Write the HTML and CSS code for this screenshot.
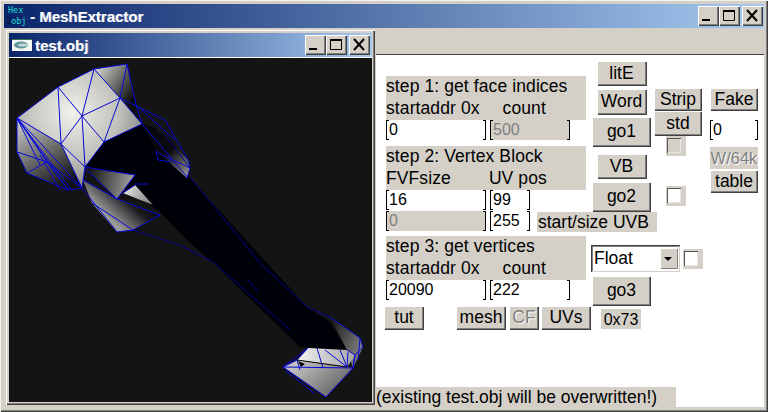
FILE: index.html
```html
<!DOCTYPE html>
<html lang="en">
<head>
  <meta charset="UTF-8">
  <meta name="viewport" content="width=device-width, initial-scale=1.0">
  <title>MeshExtractor</title>
  <link rel="stylesheet" href="styles.css">
</head>
<body>
  <div class="app">
    <div class="titlebar">
      <div class="app-icon"><span class="icon-hex">Hex</span><span class="icon-obj"><b>2</b>obj</span></div>
      <div class="title-text">- MeshExtractor</div>
      <div class="win-btns">
        <button class="win-btn"><svg width="21" height="20" viewBox="0 0 21 20"><rect x="4" y="13" width="8" height="2"/></svg></button>
        <button class="win-btn"><svg width="21" height="20" viewBox="0 0 21 20"><path d="M4.5 4.5h11v10h-11z" fill="none" stroke="#000"/><rect x="4" y="4" width="12" height="2"/></svg></button>
        <button class="win-btn close"><svg width="21" height="20" viewBox="0 0 21 20"><path d="M5 4l10 11M15 4L5 15" stroke="#000" stroke-width="2" fill="none"/></svg></button>
      </div>
    </div>

    <div class="workspace">
      <div class="child">
        <div class="titlebar child-title">
          <svg class="child-icon" width="20" height="12" viewBox="0 0 20 12">
            <rect width="20" height="12" fill="#f4f8f4"/>
            <rect width="20" height="1" fill="#3c6a4c"/>
            <ellipse cx="9" cy="6" rx="7" ry="3.5" fill="#5f9498"/>
            <ellipse cx="11" cy="6" rx="5" ry="1.5" fill="#c4d8d8"/>
          </svg>
          <div class="title-text">test.obj</div>
          <div class="win-btns">
            <button class="win-btn"><svg width="21" height="20" viewBox="0 0 21 20"><rect x="4" y="13" width="8" height="2"/></svg></button>
            <button class="win-btn"><svg width="21" height="20" viewBox="0 0 21 20"><path d="M4.5 4.5h11v10h-11z" fill="none" stroke="#000"/><rect x="4" y="4" width="12" height="2"/></svg></button>
            <button class="win-btn close"><svg width="21" height="20" viewBox="0 0 21 20"><path d="M5 4l10 11M15 4L5 15" stroke="#000" stroke-width="2" fill="none"/></svg></button>
          </div>
        </div>
        <svg class="mesh" width="363" height="344" viewBox="9 58 363 344">
          <defs>
            <radialGradient id="lit" gradientUnits="userSpaceOnUse" cx="72" cy="112" r="78">
              <stop offset="0" stop-color="#f2f2ec"/>
              <stop offset="0.6" stop-color="#c0c0bc"/>
              <stop offset="1" stop-color="#858585"/>
            </radialGradient>
            <linearGradient id="fan" gradientUnits="userSpaceOnUse" x1="25" y1="125" x2="65" y2="185">
              <stop offset="0" stop-color="#bbb"/>
              <stop offset="1" stop-color="#111"/>
            </linearGradient>
            <linearGradient id="cap" gradientUnits="userSpaceOnUse" x1="98" y1="72" x2="135" y2="95">
              <stop offset="0" stop-color="#c8c8c4"/>
              <stop offset="1" stop-color="#0c0c0c"/>
            </linearGradient>
            <linearGradient id="wedge" gradientUnits="userSpaceOnUse" x1="90" y1="172" x2="132" y2="180">
              <stop offset="0" stop-color="#181818"/>
              <stop offset="1" stop-color="#9c9c9c"/>
            </linearGradient>
            <linearGradient id="shard" gradientUnits="userSpaceOnUse" x1="125" y1="190" x2="153" y2="205">
              <stop offset="0" stop-color="#e0e0dc"/>
              <stop offset="1" stop-color="#777"/>
            </linearGradient>
            <linearGradient id="under" gradientUnits="userSpaceOnUse" x1="122" y1="230" x2="150" y2="200">
              <stop offset="0" stop-color="#9a9a9a"/>
              <stop offset="0.6" stop-color="#1c1c20"/>
              <stop offset="1" stop-color="#000"/>
            </linearGradient>
            <linearGradient id="side" gradientUnits="userSpaceOnUse" x1="188" y1="172" x2="155" y2="140">
              <stop offset="0" stop-color="#8a8a8a"/>
              <stop offset="0.6" stop-color="#0a0a0e"/>
            </linearGradient>
            <linearGradient id="foot" gradientUnits="userSpaceOnUse" x1="300" y1="362" x2="330" y2="397">
              <stop offset="0" stop-color="#c0c0c0"/>
              <stop offset="1" stop-color="#6a6a6a"/>
            </linearGradient>
            <linearGradient id="toe" gradientUnits="userSpaceOnUse" x1="300" y1="352" x2="350" y2="362">
              <stop offset="0" stop-color="#f0f0f0"/>
              <stop offset="1" stop-color="#aaa"/>
            </linearGradient>
            <linearGradient id="heel" gradientUnits="userSpaceOnUse" x1="360" y1="345" x2="320" y2="325">
              <stop offset="0" stop-color="#777"/>
              <stop offset="1" stop-color="#050508"/>
            </linearGradient>
          </defs>
          <rect x="9" y="58" width="363" height="344" fill="#141414"/>

          <polygon points="94,69 127,64 136,105 142,124 120,98" fill="url(#cap)"/>
          <polygon points="17,118 58,87 94,69 120,98 142,124 104,142 85,167 82,188 61,144" fill="url(#lit)"/>
          <polygon points="17,118 61,144 82,188 68,190 27,173 17,152" fill="url(#fan)"/>
          <polygon points="104,142 142,124 155,128 190,178 237,230 307,307 330,322 347,350 300,347 213,263 187,240 160,212 130,192 85,167" fill="#000008"/>
          <polygon points="142,124 165,135 188,160 190,168 187,178 158,153" fill="url(#side)"/>
          <polygon points="85,168 135,175 117,199" fill="url(#wedge)"/>
          <polygon points="123,193 135,185 153,205" fill="url(#shard)"/>
          <polygon points="83,180 117,199 160,215 133,230 117,232 92,203" fill="url(#under)"/>
          <polygon points="330,317 360,338 363,347 353,368 347,350" fill="url(#heel)"/>
          <polygon points="308,348 347,350 355,355 347,367 297,360" fill="url(#toe)"/>
          <polygon points="283,367 297,360 353,368 326,397" fill="url(#foot)"/>

          <g fill="none" stroke="#0808d8" stroke-width="1">
            <path d="M17 118L58 87L94 69L127 64L136 105L142 124L104 142L85 167L82 188L61 144L17 118"/>
            <path d="M58 87L61 144M58 87L82 116M94 69L82 116M94 69L120 98M127 64L120 98M120 98L82 116M82 116L104 142M120 98L104 142M82 116L61 144M82 116L85 167M61 144L85 167M120 98L142 124"/>
            <path d="M17 118L17 152L27 173L68 190L82 188M17 118L47 162M17 118L40 165M17 118L60 175M17 118L68 190M17 118L82 188M17 152L47 162L82 188M27 173L47 162M47 162L68 190M40 155L60 190M52 165L72 190"/>
            <path d="M85 167L135 175L117 199L85 168M123 193L135 185M135 184H148M82 188L117 232L133 230L160 215M83 180L117 199L160 215M92 203L133 230"/>
            <path d="M120 98L165 120L188 160L190 168L187 178M136 105L175 140M142 124L188 178M158 153L190 168M156 150L158 160L172 162"/>
            <path stroke="#04048c" d="M190 177L260 263L307 307L330 317M133 230L180 245L213 262L290 330M165 135L190 168M248 280L258 292"/>
            <path d="M308 348L297 360L283 367L326 397L353 368L355 355L347 350M308 348L283 367M283 367L353 368M297 360L300 370M317 348L323 368M325 350L347 367M340 350L347 367M348 352L347 367M286 371L315 394"/>
            <path d="M330 317L360 338L363 347L355 355L353 368M360 338L358 360"/>
          </g>
          <path d="M297 360L347 367" stroke="#000" fill="none"/>
          <polygon points="298,361 305,364 301,367" fill="#000"/>
        </svg>
      </div>

      <div class="right-side">
        <div class="menu-strip"></div>
        <div class="panel">
          <div class="form">
            <div class="form-main">
              <div class="step-row">
                <div class="step first">
                  <div class="step-label"><div>step 1: get face indices</div><div>startaddr 0x<span class="count-gap">count</span></div></div>
                  <div class="field-row">
                    <input class="field addr" value="0">
                    <input class="field num off" value="500" disabled>
                  </div>
                </div>
                <div class="step-btns">
                  <button class="btn small">litE</button>
                  <button class="btn small word">Word</button>
                  <button class="btn go">go1</button>
                </div>
              </div>

              <div class="step-row second">
                <div class="step">
                  <div class="step-label"><div>step 2: Vertex Block</div><div>FVFsize<span class="uv-gap">UV pos</span></div></div>
                  <div class="field-row">
                    <input class="field addr" value="16">
                    <input class="field short" value="99">
                  </div>
                  <div class="field-row">
                    <input class="field addr off" value="0" disabled>
                    <input class="field short" value="255">
                    <span class="tag uvb">start/size UVB</span>
                  </div>
                </div>
                <div class="step-btns vb-btns">
                  <button class="btn small">VB</button>
                  <button class="btn go">go2</button>
                </div>
              </div>

              <div class="step-row third">
                <div class="step">
                  <div class="step-label"><div>step 3: get vertices</div><div>startaddr 0x<span class="count-gap">count</span></div></div>
                  <div class="field-row">
                    <input class="field addr" value="20090">
                    <input class="field num" value="222">
                  </div>
                </div>
                <div class="step-btns float-col">
                  <div class="float-row">
                    <div class="combo"><span>Float</span><i class="combo-arrow"></i></div>
                    <div class="check"><i></i></div>
                  </div>
                  <button class="btn go">go3</button>
                </div>
              </div>

              <div class="tool-row">
                <button class="btn tut">tut</button>
                <button class="btn mesh-btn">mesh</button>
                <button class="btn cf" disabled>CF</button>
                <button class="btn uvs">UVs</button>
                <span class="tag hex">0x73</span>
              </div>
            </div>

            <div class="col-strip">
              <button class="btn side">Strip</button>
              <button class="btn side std">std</button>
              <div class="check dim"><i></i></div>
              <div class="check lower"><i></i></div>
            </div>

            <div class="col-fake">
              <button class="btn side">Fake</button>
              <input class="field fake" value="0">
              <button class="btn side w64" disabled>W/64k</button>
              <button class="btn side">table</button>
            </div>
          </div>
          <div class="status">(existing test.obj will be overwritten!)</div>
        </div>
      </div>
    </div>
  </div>
</body>
</html>
```

FILE: styles.css
```css
* {
  box-sizing: border-box;
}
body {
  margin: 0;
  width: 768px;
  height: 412px;
  overflow: hidden;
  font-family: "Liberation Sans", Arial, sans-serif;
  font-size: 17.5px;
  color: #000;
  background: #d4d0c8;
}
button, input {
  font-family: inherit;
  color: #000;
  margin: 0;
  padding: 0;
}
.app {
  width: 768px;
  height: 412px;
  padding: 4px;
  background: #d4d0c8;
  display: flex;
  flex-direction: column;
  box-shadow: inset 1px 1px 0 #f4f2ee, inset -1px -1px 0 #404040, inset -2px -2px 0 #808080;
}

/* title bars */
.titlebar {
  display: flex;
  align-items: center;
  height: 24px;
  flex-shrink: 0;
  padding: 0 1px 0 2px;
  background: linear-gradient(to right, #0a246a, #a6caf0);
}
.title-text {
  color: #fff;
  font-size: 15px;
  font-weight: bold;
  text-shadow: 1px 0 0 rgba(255,255,255,0.35);
}
.app-icon {
  width: 21px;
  height: 22px;
  margin-right: 3px;
  display: flex;
  flex-direction: column;
  font-family: "DejaVu Sans Mono", monospace;
  color: #22d8d0;
  white-space: nowrap;
}
.icon-hex {
  font-size: 8.5px;
  line-height: 10px;
  padding-left: 2px;
}
.icon-obj {
  font-size: 8.5px;
  line-height: 12px;
}
.icon-obj b {
  font-weight: normal;
  color: #04102c;
}
.win-btns {
  margin-left: auto;
  display: flex;
}
.win-btn {
  width: 21px;
  height: 20px;
  display: block;
  border: 0;
  background: #d4d0c8;
  box-shadow: inset 1px 1px 0 #fff, inset -1px -1px 0 #404040, inset -2px -2px 0 #808080;
}
.win-btn svg {
  display: block;
}
.win-btn.close {
  margin-left: 2px;
}

/* workspace */
.workspace {
  flex: 1;
  display: flex;
  min-height: 0;
}
.child {
  width: 369px;
  height: 375px;
  margin: 2px 1px 0 2px;
  padding: 3px;
  display: flex;
  flex-direction: column;
  background: #d4d0c8;
  box-shadow: inset 1px 1px 0 #fff, inset -1px -1px 0 #404040, inset -2px -2px 0 #808080;
}
.child-title {
  height: 25px;
  padding-left: 3px;
  padding-right: 2px;
  border-bottom: 1px solid #fff;
}
.child-icon {
  margin-right: 3px;
}
.mesh {
  display: block;
}
.right-side {
  width: 388px;
  display: flex;
  flex-direction: column;
}
.menu-strip {
  height: 27px;
  flex-shrink: 0;
  border-bottom: 1px solid #404040;
}
.panel {
  flex: 1;
  display: flex;
  flex-direction: column;
  background: #fff;
  border-bottom: 1px solid #d4d0c8;
}

/* form */
.form {
  display: flex;
  padding: 6px 0 0 10px;
}
.form-main {
  width: 265px;
  margin-right: 3px;
}
.step-row {
  display: flex;
  gap: 6px;
}
.step-row.second {
  margin-top: -1px;
}
.step-row.third {
  margin-top: 4px;
}
.step {
  width: 200px;
}
.step.first {
  margin-top: 15px;
}
.step-label {
  height: 44px;
  display: flex;
  flex-direction: column;
  gap: 1px;
  line-height: 21px;
  letter-spacing: 0.1px;
  white-space: nowrap;
  background: #d4d0c8;
}
.count-gap {
  margin-left: 23px;
}
.uv-gap {
  margin-left: 38px;
}
.field-row {
  display: flex;
  gap: 4px;
  white-space: nowrap;
}
.field {
  display: block;
  height: 20px;
  padding-left: 3px;
  border: 0;
  outline: 0;
  font-size: 16px;
  background:
    linear-gradient(#000, #000) left top / 1px 100% no-repeat,
    linear-gradient(#000, #000) right top / 1px 100% no-repeat,
    linear-gradient(#000, #000) left top / 3px 1px no-repeat,
    linear-gradient(#000, #000) left bottom / 3px 1px no-repeat,
    linear-gradient(#000, #000) right top / 3px 1px no-repeat,
    linear-gradient(#000, #000) right bottom / 3px 1px no-repeat,
    #fff;
}
.field.off {
  color: #808080;
  -webkit-text-fill-color: #808080;
  opacity: 1;
  background-color: #d4d0c8;
}
.addr {
  width: 100px;
}
.num {
  width: 80px;
}
.short {
  width: 40px;
}
.field-row + .field-row {
  margin-top: 1px;
}
.tag {
  background: #d4d0c8;
}
.uvb {
  height: 20px;
  line-height: 20px;
  width: 120px;
  flex-shrink: 0;
  margin-left: 3px;
  padding-left: 1px;
  margin-top: 1px;
}

/* buttons */
.btn {
  display: block;
  border: 0;
  font-size: 17.5px;
  line-height: 1;
  background: #d4d0c8;
  box-shadow: inset 1px 1px 0 #fff, inset -1px -1px 0 #404040, inset -2px -2px 0 #808080;
}
.btn:disabled {
  color: #808080;
  text-shadow: 1px 1px 0 #fff;
}
.step-btns {
  width: 59px;
  display: flex;
  flex-direction: column;
  align-items: center;
}
.small {
  width: 50px;
  height: 25px;
}
.word {
  height: 26px;
  margin-top: 3px;
}
.go {
  width: 59px;
  height: 30px;
  margin-top: 2px;
}
.vb-btns {
  padding-top: 8px;
}
.vb-btns .go {
  margin-top: 3px;
}
.float-col {
  align-items: flex-start;
  padding-top: 9px;
}
.float-col .go {
  margin-top: 4px;
}
.float-row {
  display: flex;
  align-items: center;
  margin-left: -1px;
  flex-shrink: 0;
}
.combo {
  width: 89px;
  height: 27px;
  flex-shrink: 0;
  padding: 3px 2px 0 3px;
  display: flex;
  justify-content: space-between;
  background: #fff;
  box-shadow: inset 1px 1px 0 #404040, inset -1px -1px 0 #d4d0c8, inset 2px 2px 0 #808080;
}
.combo-arrow {
  width: 18px;
  height: 21px;
  position: relative;
  background: #d4d0c8;
  box-shadow: inset 1px 1px 0 #fff, inset -1px -1px 0 #808080;
}
.combo-arrow::after {
  content: "";
  position: absolute;
  left: 4px;
  top: 9px;
  border: 4px solid transparent;
  border-top: 4px solid #000;
  border-bottom: 0;
}
.check {
  width: 20px;
  height: 20px;
  padding: 2px 5px 3px 1px;
  flex-shrink: 0;
  background: #d4d0c8;
}
.float-row .check {
  margin-left: 3px;
}
.check i {
  display: block;
  width: 14px;
  height: 15px;
  background: #fff;
  box-shadow: inset 1px 1px 0 #555, inset -1px -1px 0 #e8e6e0;
}
.check.dim i {
  background: #d4d0c8;
}
.tool-row {
  display: flex;
  margin-left: -2px;
  align-items: flex-start;
  width: 270px;
}
.tool-row .btn {
  height: 24px;
  flex-shrink: 0;
}
.tut {
  width: 40px;
}
.mesh-btn {
  width: 50px;
  margin-left: 32px;
}
.cf {
  width: 30px;
  margin-left: 3px;
}
.uvs {
  width: 50px;
  margin-left: 2px;
}
.hex {
  width: 40px;
  height: 20px;
  flex-shrink: 0;
  margin: 3px 0 0 10px;
  font-size: 16px;
  line-height: 21px;
  text-align: center;
}

/* side columns */
.col-strip, .col-fake {
  width: 48px;
  padding-top: 27px;
  flex-shrink: 0;
}
.col-fake {
  margin-left: 8px;
}
.side {
  width: 48px;
  height: 23px;
}
.std {
  height: 25px;
}
.col-strip .check {
  margin-left: 12px;
}
.check.lower {
  margin-top: 30px;
}
.fake {
  width: 48px;
  margin-top: 9px;
}
.w64 {
  margin-top: 7px;
  box-shadow: inset 0 -1px 0 #fff;
  font-size: 16.5px;
  white-space: nowrap;
  overflow: hidden;
}

.status {
  margin-top: auto;
  width: 300px;
  height: 20px;
  line-height: 20px;
  white-space: nowrap;
  background: #d4d0c8;
}
```
